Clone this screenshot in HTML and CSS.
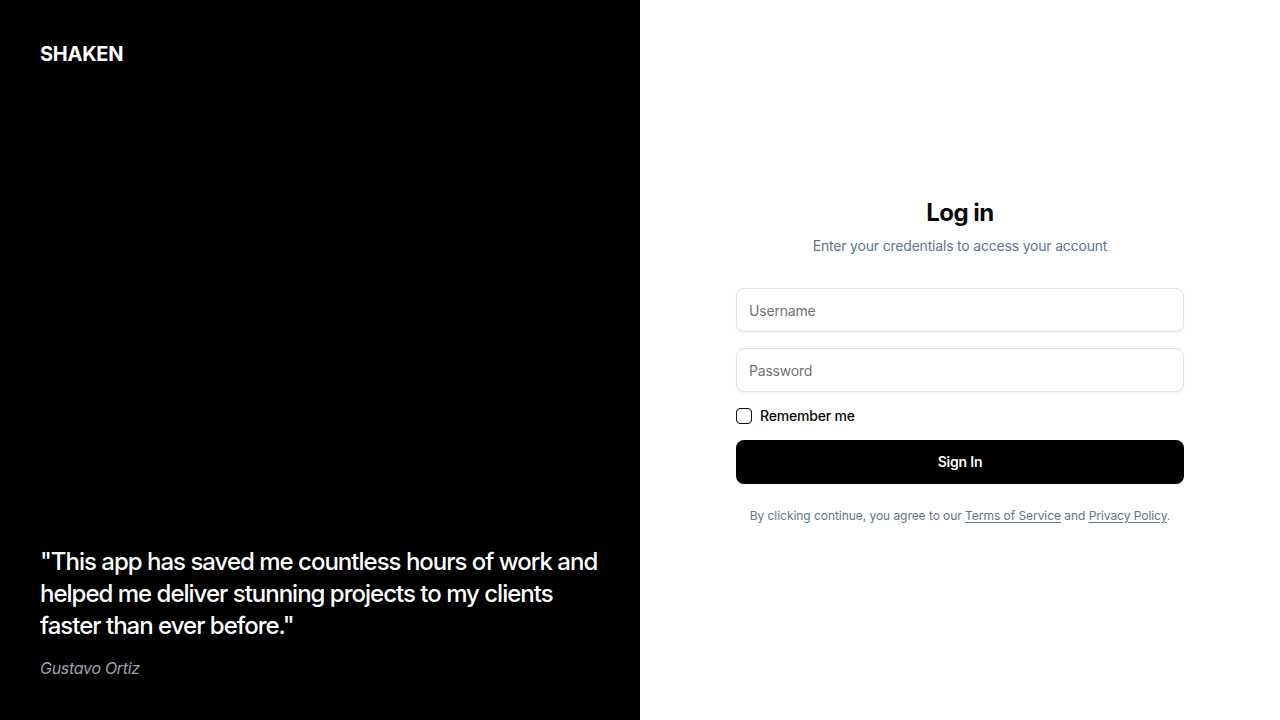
FILE: index.html
```html
<!DOCTYPE html>
<html lang="en">
<head>
<meta charset="utf-8">
<title>Log in - Shaken</title>
<link rel="stylesheet" href="styles.css">
</head>
<body>
<div class="page">
  <aside class="brand-panel">
    <div class="logo">SHAKEN</div>
    <blockquote class="testimonial">
      <p class="quote">"This app has saved me countless hours of work and helped me deliver stunning projects to my clients faster than ever before."</p>
      <footer class="author">Gustavo Ortiz</footer>
    </blockquote>
  </aside>
  <main class="form-panel">
    <div class="form-wrap">
      <div class="form-header">
        <h1 class="title">Log in</h1>
        <p class="subtitle">Enter your credentials to access your account</p>
      </div>
      <form class="form">
        <input class="input" type="text" placeholder="Username">
        <input class="input" type="password" placeholder="Password">
        <label class="remember">
          <span class="checkbox"></span>
          <span>Remember me</span>
        </label>
        <button class="btn" type="button">Sign In</button>
      </form>
      <p class="terms">By clicking continue, you agree to our <a href="#">Terms of Service</a> and <a href="#">Privacy Policy</a>.</p>
    </div>
  </main>
</div>
</body>
</html>
```
FILE: styles.css
```css
* { box-sizing: border-box; }
html, body { margin: 0; padding: 0; }
body {
  font-family: Inter, "Noto Sans", sans-serif;
  color: #0a0a0a;
  background: #fff;
  letter-spacing: -0.012em;
}
.page {
  display: grid;
  grid-template-columns: 640px 640px;
  height: 720px;
}
.brand-panel {
  background: #000;
  color: #fff;
  padding: 40px;
  display: flex;
  flex-direction: column;
  justify-content: space-between;
}
.logo {
  font-size: 20px;
  line-height: 28px;
  font-weight: 700;
  letter-spacing: -0.25px;
}
.testimonial { margin: 0; }
.quote {
  margin: 0;
  font-size: 24px;
  line-height: 32px;
  font-weight: 500;
  letter-spacing: -1px;
}
.author {
  margin-top: 14px;
  font-size: 16px;
  line-height: 24px;
  font-style: italic;
  color: #9ca3af;
  letter-spacing: -0.3px;
}
.form-panel {
  display: flex;
  align-items: center;
  justify-content: center;
}
.form-wrap {
  width: 448px;
  display: flex;
  flex-direction: column;
}
.form-header {
  text-align: center;
  display: flex;
  flex-direction: column;
  gap: 7px;
  margin-bottom: 32px;
}
.title {
  margin: 0;
  font-size: 24px;
  line-height: 32px;
  font-weight: 700;
  letter-spacing: -0.5px;
}
.subtitle {
  margin: 0;
  font-size: 14px;
  line-height: 20px;
  color: #64748b;
}
.form {
  display: flex;
  flex-direction: column;
  gap: 16px;
}
.input {
  height: 44px;
  width: 100%;
  border: 1px solid #e2e2e2;
  border-radius: 8px;
  padding: 1px 12px 0;
  font-family: inherit;
  font-size: 14px;
  letter-spacing: inherit;
  color: #0a0a0a;
  background: #fff;
  box-shadow: 0 1px 2px rgba(0,0,0,0.06);
  outline: none;
}
.input::placeholder { color: #737373; }
.remember {
  display: flex;
  align-items: center;
  gap: 8px;
  font-size: 14px;
  line-height: 16px;
  font-weight: 500;
  cursor: pointer;
}
.checkbox {
  width: 16px;
  height: 16px;
  border: 1px solid #0a0a0a;
  border-radius: 4px;
  background: #fff;
}
.btn {
  height: 44px;
  border: none;
  border-radius: 8px;
  background: #000;
  color: #fff;
  font-family: inherit;
  font-size: 14px;
  letter-spacing: inherit;
  font-weight: 600;
  cursor: pointer;
}
.terms {
  margin: 24px 0 0;
  text-align: center;
  font-size: 12px;
  line-height: 16px;
  color: #64748b;
  letter-spacing: -0.05px;
}
.terms a {
  color: #64748b;
  text-decoration: underline;
  text-underline-offset: 2px;
}
```
